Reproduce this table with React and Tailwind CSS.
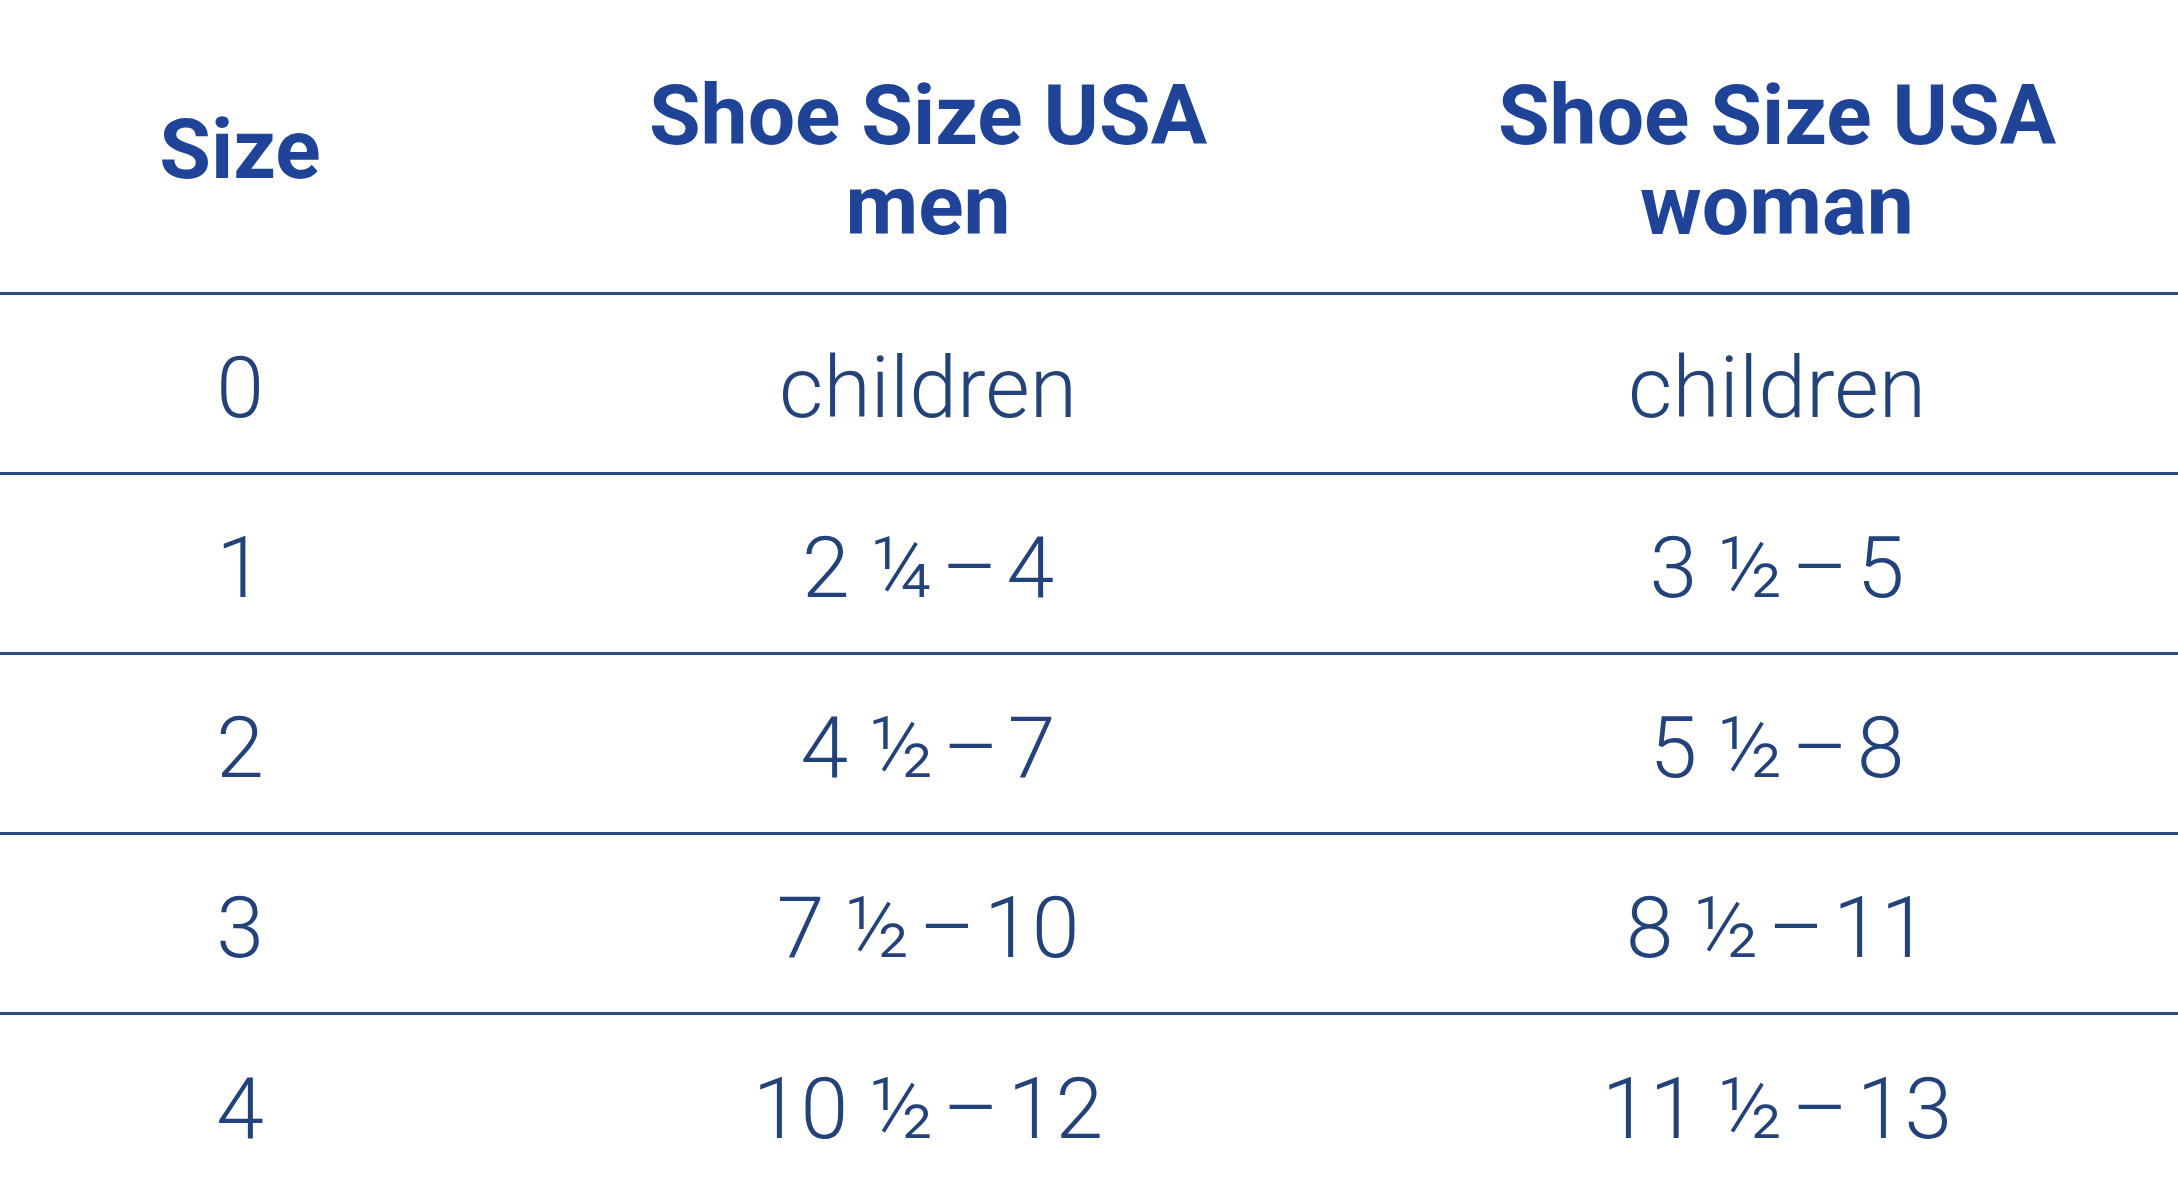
const rows = [
  { size: "0", men: "children", woman: "children" },
  { size: "1", men: "2 ¼\u200a–\u200a4", woman: "3 ½\u200a–\u200a5" },
  { size: "2", men: "4 ½\u200a–\u200a7", woman: "5 ½\u200a–\u200a8" },
  { size: "3", men: "7 ½\u200a–\u200a10", woman: "8 ½\u200a–\u200a11" },
  { size: "4", men: "10 ½\u200a–\u200a12", woman: "11 ½\u200a–\u200a13" },
];

function Cell({ className = "", children }) {
  return (
    <div className={"flex items-center justify-center text-center " + className}>
      {children}
    </div>
  );
}

export default function App() {
  return (
    <div
      className="w-[2178px] h-[1185px] overflow-hidden bg-white"
      style={{ fontFamily: "Roboto, 'Liberation Sans', sans-serif" }}
    >
      {/* header */}
      <div className="grid grid-cols-[480px_896px_1fr] h-[295px] border-b-[3px] border-[#2c4a7e] text-[#1f4396] font-bold text-[84px] leading-[90px] pt-2">
        <Cell>Size</Cell>
        <Cell className="pt-[22px]">
          Shoe Size USA
          <br />
          men
        </Cell>
        <Cell className="pt-[22px]">
          Shoe Size USA
          <br />
          woman
        </Cell>
      </div>

      {rows.map((r, i) => (
        <div
          key={r.size}
          className={
            "grid grid-cols-[480px_896px_1fr] text-[#24427a] text-[86px] font-light leading-none pt-2 h-[180px] " +
            (i < rows.length - 1 ? "border-b-[3px] border-[#2c4a7e]" : "")
          }
        >
          <Cell>{r.size}</Cell>
          <Cell className="whitespace-pre">{r.men}</Cell>
          <Cell className="whitespace-pre">{r.woman}</Cell>
        </div>
      ))}
    </div>
  );
}
